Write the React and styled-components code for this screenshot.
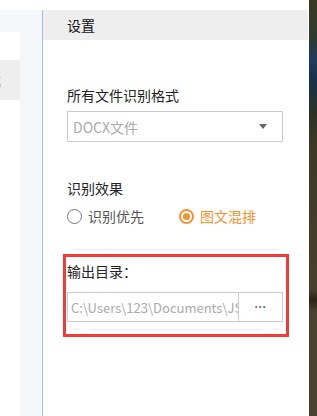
import React from "react";
import styled, { createGlobalStyle } from "styled-components";

const Global = createGlobalStyle`
  html, body { margin: 0; padding: 0; background: #fff; }
  body { font-family: "Noto Sans CJK SC", "Microsoft YaHei", sans-serif; }
  * { box-sizing: border-box; }
`;

const Page = styled.div`
  width: 317px;
  height: 416px;
  display: flex;
  background: #fff;
  overflow: hidden;
`;

const LeftPane = styled.div`
  width: 42px;
  padding-top: 10px;
  display: flex;
  flex-direction: column;
`;

const LeftInner = styled.div`
  flex: 1;
  background: #f5f7fa;
  padding: 22px 22px 0 0;
  display: flex;
`;

const NavList = styled.div`
  flex: 1;
  background: #fff;
  padding-top: 28px;
`;

const NavItem = styled.div`
  height: 40px;
  background: ${(p) => (p.$active ? "#eeeeee" : "transparent")};
  overflow: hidden;
  display: flex;
  align-items: center;
  font-size: 14px;
  color: #f8a868;
  white-space: nowrap;
  span { margin-left: -12.5px; }
`;

const Divider = styled.div`
  width: 1px;
  margin-top: 10px;
  background: #a9bde3;
`;

const Main = styled.div`
  width: 266px;
  padding-top: 10px;
  display: flex;
  flex-direction: column;
`;

const Header = styled.div`
  height: 30px;
  margin-right: 1px;
  background: #eeeeee;
  display: flex;
  align-items: center;
  padding-left: 24px;
  font-size: 14px;
  color: #111;
`;

const Content = styled.div`
  padding: 45px 0 0 24px;
  display: flex;
  flex-direction: column;
`;

const Label = styled.div`
  font-size: 14px;
  line-height: 20px;
  color: #222;
  margin-top: ${(p) => p.$mt || 0}px;
`;

const Select = styled.div`
  margin-top: 6px;
  width: 216px;
  height: 31px;
  border: 1px solid #cccccc;
  display: flex;
  align-items: center;
  justify-content: space-between;
  padding: 0 15px 0 5px;
  font-size: 14px;
  color: #aaaaaa;
`;

const Caret = styled.span`
  width: 0;
  height: 0;
  border-left: 4.5px solid transparent;
  border-right: 4.5px solid transparent;
  border-top: 5px solid #666;
`;

const RadioRow = styled.div`
  margin-top: 8px;
  height: 20px;
  display: flex;
  align-items: center;
`;

const RadioOption = styled.label`
  display: flex;
  align-items: center;
  gap: 6px;
  width: 112px;
  font-size: 14px;
  color: ${(p) => (p.$checked ? "#f7922f" : "#555")};
`;

const RadioCircle = styled.span`
  width: 15px;
  height: 15px;
  border-radius: 50%;
  border: ${(p) => (p.$checked ? "2px solid #f7922f" : "1.5px solid #777")};
  display: flex;
  align-items: center;
  justify-content: center;
  &::after {
    content: "";
    display: ${(p) => (p.$checked ? "block" : "none")};
    width: 7px;
    height: 7px;
    border-radius: 50%;
    background: #f7922f;
  }
`;

const Highlight = styled.div`
  margin: 28px 0 0 -4px;
  width: 226px;
  border: 3px solid #f23a3a;
  padding: 4px 3px 12px 1px;
  display: flex;
  flex-direction: column;
`;

const PathGroup = styled.div`
  margin-top: 11px;
  width: 216px;
  height: 30px;
  border: 1px solid #cccccc;
  display: flex;
`;

const PathInput = styled.div`
  flex: 1;
  min-width: 0;
  overflow: hidden;
  white-space: nowrap;
  display: flex;
  align-items: center;
  padding-left: 3px;
  font-size: 13px;
  color: #aaaaaa;
`;

const BrowseButton = styled.div`
  width: 44px;
  flex: none;
  border-left: 1px solid #cccccc;
  display: flex;
  align-items: center;
  justify-content: center;
  font-family: "Liberation Sans", Arial, sans-serif;
  font-size: 12px;
  font-weight: bold;
  color: #667;
`;

const RightStrip = styled.div`
  width: 8px;
  background: linear-gradient(
    180deg,
    #3a3a22 0px,
    #2e3a30 40px,
    #1f3a62 60px,
    #18304a 80px,
    #2a3128 110px,
    #3c3826 140px,
    #47402c 290px,
    #2a2418 300px,
    #4a4230 312px,
    #4a4230 416px
  );
`;

export default function App() {
  return (
    <>
      <Global />
      <Page>
        <LeftPane>
          <LeftInner>
            <NavList>
              <NavItem $active>
                <span>式</span>
              </NavItem>
            </NavList>
          </LeftInner>
        </LeftPane>
        <Divider />
        <Main>
          <Header>设置</Header>
          <Content>
            <Label>所有文件识别格式</Label>
            <Select>
              <span>DOCX文件</span>
              <Caret />
            </Select>
            <Label $mt={36}>识别效果</Label>
            <RadioRow>
              <RadioOption>
                <RadioCircle />
                识别优先
              </RadioOption>
              <RadioOption $checked>
                <RadioCircle $checked />
                图文混排
              </RadioOption>
            </RadioRow>
            <Highlight>
              <Label>输出目录：</Label>
              <PathGroup>
                <PathInput>C:\Users\123\Documents\JSON</PathInput>
                <BrowseButton>···</BrowseButton>
              </PathGroup>
            </Highlight>
          </Content>
        </Main>
        <RightStrip />
      </Page>
    </>
  );
}
